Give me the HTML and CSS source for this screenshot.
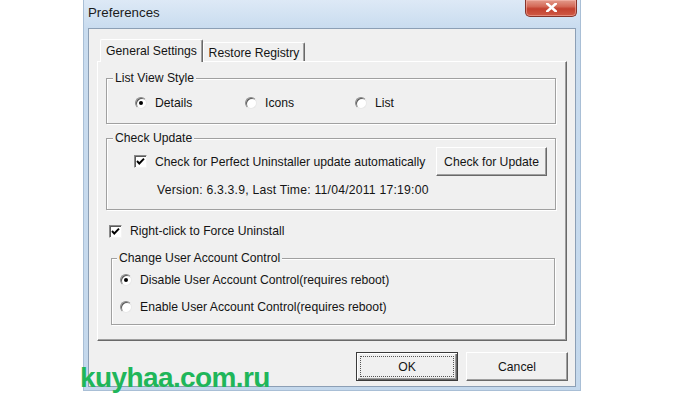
FILE: index.html
```html
<!DOCTYPE html>
<html>
<head>
<meta charset="utf-8">
<link rel="stylesheet" href="styles.css">
</head>
<body>
<div class="window">
  <div class="titlebar">
    <span class="title">Preferences</span>
    <div class="close">
      <svg width="11" height="9" viewBox="0 0 11 9"><path d="M1 0.5 L10 8.5 M10 0.5 L1 8.5" stroke="#fff" stroke-width="2.6" stroke-linecap="square"/></svg>
    </div>
  </div>
  <div class="client">
    <div class="tabs">
      <div class="tab active">General Settings</div>
      <div class="tab">Restore Registry</div>
    </div>
    <div class="panel">
      <fieldset class="group lvs">
        <legend>List View Style</legend>
        <div class="radio-row">
          <label class="opt wide"><span class="radio checked"></span>Details</label>
          <label class="opt wide"><span class="radio"></span>Icons</label>
          <label class="opt wide"><span class="radio"></span>List</label>
        </div>
      </fieldset>
      <fieldset class="group cu">
        <legend>Check Update</legend>
        <div class="cu-row">
          <label class="opt"><span class="check"><svg width="11" height="11" viewBox="0 0 11 11"><path d="M2 5 L4.3 7.5 L9 2.6" fill="none" stroke="#000" stroke-width="1.9"/></svg></span>Check for Perfect Uninstaller update automatically</label>
          <button class="btn upd">Check for Update</button>
        </div>
        <div class="version">Version: 6.3.3.9, Last Time: 11/04/2011 17:19:00</div>
      </fieldset>
      <label class="opt force"><span class="check"><svg width="11" height="11" viewBox="0 0 11 11"><path d="M2 5 L4.3 7.5 L9 2.6" fill="none" stroke="#000" stroke-width="1.9"/></svg></span>Right-click to Force Uninstall</label>
      <fieldset class="group uac">
        <legend>Change User Account Control</legend>
        <label class="opt"><span class="radio checked"></span>Disable User Account Control(requires reboot)</label>
        <label class="opt second"><span class="radio"></span>Enable User Account Control(requires reboot)</label>
      </fieldset>
    </div>
    <div class="buttons">
      <button class="btn default"><span class="focus">OK</span></button>
      <button class="btn">Cancel</button>
    </div>
  </div>
</div>
<div class="watermark">kuyhaa.com.ru</div>
</body>
</html>
```
FILE: styles.css
```css
* { box-sizing: border-box; }
body {
  margin: 0;
  width: 700px;
  height: 394px;
  overflow: hidden;
  position: relative;
  background: #fff;
  font-family: "Liberation Sans", Arial, sans-serif;
  font-size: 12.2px;
  color: #141414;
}
.window {
  position: relative;
  margin-left: 83px;
  width: 498px;
  height: 391px;
  padding: 0 4px 4px;
  border: 1px solid #a9bfd6;
  border-top: none;
  background: linear-gradient(to bottom, #dde9f6 0, #c9dcef 28px, #c4d8ec 100%);
}
.titlebar {
  height: 28px;
  display: flex;
  align-items: center;
  font-size: 13.3px;
  color: #1b1b1b;
  padding-bottom: 3px;
}
.close {
  position: absolute;
  top: 0;
  right: 3px;
  width: 52px;
  height: 17px;
  border: 1px solid #86342a;
  border-top: none;
  border-radius: 0 0 5px 5px;
  background: linear-gradient(to bottom, #e39a8b 0%, #d46a58 40%, #c3412f 55%, #cf5a45 100%);
  box-shadow: inset 0 0 0 1px rgba(255, 200, 190, 0.45);
  display: flex;
  align-items: center;
  justify-content: center;
  padding-bottom: 2px;
}
.client {
  height: 359px;
  background: #f0f0f0;
  border: 1px solid #8c9fb5;
  padding: 10px 8px 0 8px;
}
.tabs {
  display: flex;
  align-items: flex-end;
  height: 23px;
  margin-bottom: -1px;
  padding-left: 3px;
  position: relative;
  z-index: 1;
}
.tab {
  height: 19px;
  margin-bottom: 1px;
  width: 102px;
  display: flex;
  align-items: center;
  justify-content: center;
  background: #f0f0f0;
  border-top: 1px solid #fff;
  border-left: 1px solid #fff;
  border-right: 1px solid #696969;
  box-shadow: inset -1px 0 0 #a0a0a0;
  border-radius: 2px 2px 0 0;
  padding-top: 1px;
}
.tab.active {
  height: 23px;
  margin-bottom: 0;
  width: 103px;
  padding-bottom: 2px;
}
.panel {
  height: 280px;
  border: 1px solid;
  border-color: #fff #696969 #696969 #fff;
  box-shadow: inset -1px -1px 0 #a0a0a0;
  padding: 0 10px 0 8px;
  display: flex;
  flex-direction: column;
  align-items: stretch;
}
.group {
  margin: 0;
  min-width: 0;
  border: 1px solid #a0a0a0;
  box-shadow: 1px 1px 0 #fff, inset 1px 1px 0 #fff;
  padding: 0 8px 0 6px;
}
.group legend {
  padding: 0 2px;
  line-height: 14px;
  background: #f0f0f0;
}
.lvs {
  margin-top: 9px;
  padding-top: 10px;
  padding-bottom: 12px;
}
.radio-row {
  display: flex;
  margin-left: 22px;
}
.opt {
  display: flex;
  align-items: center;
  gap: 8px;
  height: 16px;
  white-space: nowrap;
}
.opt.wide { width: 110px; }
.radio {
  width: 12px;
  height: 12px;
  border-radius: 50%;
  background: #fff;
  border: 1px solid;
  border-color: #8a8a8a #e8e8e8 #e8e8e8 #8a8a8a;
  box-shadow: inset 1px 1px 0 #5a5a5a;
  position: relative;
  flex: none;
}
.radio.checked::after {
  content: "";
  position: absolute;
  left: 3px;
  top: 3px;
  width: 4px;
  height: 4px;
  border-radius: 50%;
  background: #000;
}
.check {
  width: 13px;
  height: 13px;
  background: #fff;
  border: 1px solid;
  border-color: #8a8a8a #f4f4f4 #f4f4f4 #8a8a8a;
  box-shadow: inset 1px 1px 0 #5a5a5a;
  display: flex;
  align-items: center;
  justify-content: center;
  flex: none;
}
.cu {
  margin-top: 7px;
  padding-top: 2px;
  padding-bottom: 12px;
}
.cu-row {
  display: flex;
  align-items: center;
  justify-content: space-between;
  height: 29px;
  margin-left: 21px;
}
.version {
  margin-top: 7px;
  margin-left: 44px;
  line-height: 14px;
  letter-spacing: 0.22px;
}
.btn {
  font-family: inherit;
  font-size: 12.2px;
  color: #141414;
  background: #f0f0f0;
  border: 1px solid;
  border-color: #fff #696969 #696969 #fff;
  box-shadow: inset -1px -1px 0 #a0a0a0;
  padding: 0;
  height: 29px;
  display: flex;
  align-items: center;
  justify-content: center;
}
.btn.upd { width: 111px; }
.force {
  margin-top: 14px;
  margin-left: 3px;
  height: 14px;
}
.uac {
  margin-top: 13px;
  margin-left: 5px;
  margin-right: 1px;
  padding: 8px 8px 10px 5px;
}
.uac .opt {
  margin-left: 3px;
  height: 14px;
}
.uac .opt.second { margin-top: 13px; }
.buttons {
  display: flex;
  justify-content: flex-end;
  gap: 8px;
  margin-top: 11px;
  margin-right: -1px;
}
.buttons .btn { width: 102px; }
.btn.default {
  border: 1px solid #3a3a3a;
  box-shadow: inset 1px 1px 0 #fff, inset -1px -1px 0 #696969, inset -2px -2px 0 #a0a0a0;
  padding: 3px;
}
.focus {
  flex: 1;
  align-self: stretch;
  border: 1px dotted #555;
  display: flex;
  align-items: center;
  justify-content: center;
}
.watermark {
  position: absolute;
  left: 80px;
  top: 364px;
  font-family: "Liberation Sans", Arial, sans-serif;
  font-weight: bold;
  font-size: 28px;
  letter-spacing: -0.6px;
  color: #1fb65a;
  line-height: 1;
}
```
